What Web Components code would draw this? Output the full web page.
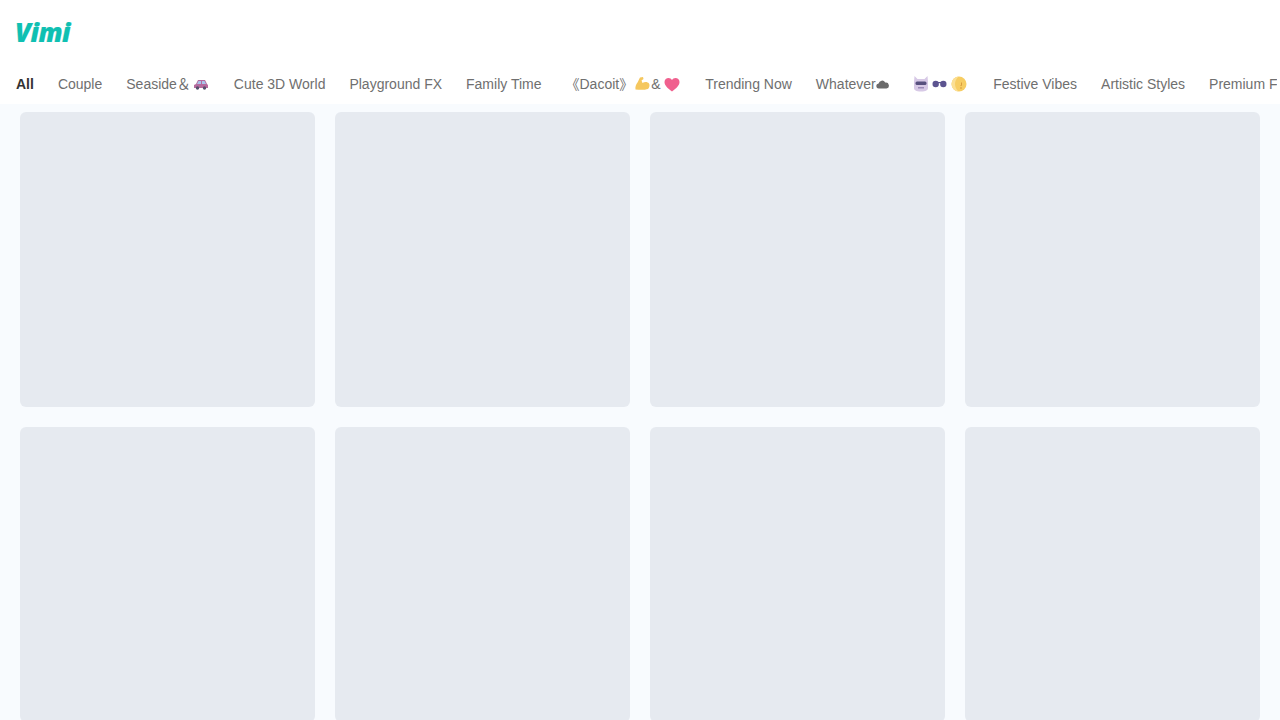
<!DOCTYPE html>
<html lang="en">
<head>
<meta charset="utf-8">
<title>Vimi</title>
<style>
    html, body { margin: 0; height: 100%; overflow: hidden; }
    body { background: #f8fbfe; font-family: "Liberation Sans", "Noto Sans CJK SC", sans-serif; }
</style>
</head>
<body>
<vimi-app>
    <vimi-header>
        <vimi-tab active>All</vimi-tab>
        <vimi-tab>Couple</vimi-tab>
        <vimi-tab>Seaside＆<svg style="margin-left:2px;margin-right:1px" width="16" height="14" viewBox="0 0 16 14"><path d="M1 11V8l2-1 2-4h7l2 4 1 1v3z" fill="#b56a9e"/><path d="M5.500 4h2.500v3H4zM9 4h2.500l1.500 3H9z" fill="#a9c3ea"/><circle cx="4.500" cy="11" r="1.700" fill="#56506e"/><circle cx="11.500" cy="11" r="1.700" fill="#56506e"/></svg></vimi-tab>
        <vimi-tab>Cute 3D World</vimi-tab>
        <vimi-tab>Playground FX</vimi-tab>
        <vimi-tab>Family Time</vimi-tab>
        <vimi-tab>《Dacoit》<svg style="margin-left:1px" width="17" height="16" viewBox="0 0 17 16"><path d="M6 1.500 9 1l.5 2-2 1.500 1 2.500c2-1.500 5-1.500 6.500.5 1 1.500.5 4-1 5.500-3 1-8 1-12.500.5C1 11 2 8 3.500 6.500 4.500 5 5 3 6 1.500z" fill="#f5c75e"/></svg>&amp;<svg style="margin-left:3px;margin-right:1.700px" width="16" height="15" viewBox="0 0 16 15"><path d="M8 14.500C3.500 11 .5 8.500.5 5 .5 2.500 2.500 1 4.500 1 6 1 7.300 1.800 8 3c.7-1.200 2-2 3.500-2 2 0 4 1.500 4 4 0 3.500-3 6-7.500 9.500z" fill="#f0608e"/></svg></vimi-tab>
        <vimi-tab>Trending Now</vimi-tab>
        <vimi-tab>Whatever<svg width="13" height="9" viewBox="0 0 13 9"><path d="M3 8.500a2.500 2.500 0 0 1-.4-5A3.500 3.500 0 0 1 9.200 2.600 3 3 0 0 1 10.500 8.500z" fill="#6b6b6b"/></svg></vimi-tab>
        <vimi-tab><svg width="16" height="16" viewBox="0 0 16 16"><path d="M1.500 0 4.500 3h7l3-3 .5 6v6c0 2-2 3.500-7 3.500S1 14 1 12V6z" fill="#d7c9e6"/><rect x="2.500" y="5.500" width="11" height="3.500" rx="1.500" fill="#57507e"/><rect x="5" y="11" width="6" height="1.500" fill="#9c8bb8"/></svg><svg style="margin-left:3px" width="15" height="8" viewBox="0 0 15 8"><circle cx="3.700" cy="4" r="3.200" fill="#5c5490"/><circle cx="11.300" cy="4" r="3.200" fill="#5c5490"/><rect x="5" y="2" width="5" height="1.200" fill="#5c5490"/></svg><svg style="margin-left:4px;margin-right:2.500px" width="16" height="16" viewBox="0 0 16 16"><circle cx="8" cy="8" r="7.500" fill="#f7cd63"/><path d="M.5 8A7.500 7.500 0 0 1 7.500.5C5 3 4 5.500 4 8s1 5 3.500 7.500A7.500 7.500 0 0 1 .5 8z" fill="#fbdf94"/><path d="M10.500 6.500v3h-1M9 12h2" stroke="#d99c3f" fill="none"/></svg></vimi-tab>
        <vimi-tab>Festive Vibes</vimi-tab>
        <vimi-tab>Artistic Styles</vimi-tab>
        <vimi-tab>Premium Filters</vimi-tab>
    </vimi-header>
    <vimi-grid>
        <vimi-card></vimi-card><vimi-card></vimi-card><vimi-card></vimi-card><vimi-card></vimi-card>
        <vimi-card></vimi-card><vimi-card></vimi-card><vimi-card></vimi-card><vimi-card></vimi-card>
    </vimi-grid>
</vimi-app>

<script>
class VimiApp extends HTMLElement {
    constructor() {
        super();
        this.attachShadow({ mode: 'open' }).innerHTML = `
            <style>
                :host { display: flex; flex-direction: column; height: 720px; overflow: hidden; }
            </style>
            <slot></slot>
        `;
    }
}

class VimiHeader extends HTMLElement {
    constructor() {
        super();
        this.attachShadow({ mode: 'open' }).innerHTML = `
            <style>
                :host { display: block; background: #fff; height: 104px; flex: none; overflow: hidden; }
                .logo {
                    height: 64px;
                    padding-left: 15px;
                    font: italic 800 26px/64px "Open Sans", sans-serif;
                    color: #0fc0b2;
                    -webkit-text-stroke: .2px #0fc0b2;
                    letter-spacing: -.5px;
                }
                .tabs {
                    display: flex;
                    gap: 24px;
                    height: 40px;
                    margin-right: 3px;
                    padding-left: 16px;
                    align-items: center;
                    white-space: nowrap;
                    overflow: hidden;
                }
            </style>
            <div class="logo">Vimi</div>
            <div class="tabs"><slot></slot></div>
        `;
    }
}

class VimiTab extends HTMLElement {
    constructor() {
        super();
        this.attachShadow({ mode: 'open' }).innerHTML = `
            <style>
                :host {
                    display: inline-flex;
                    flex: none;
                    align-items: center;
                    font-size: 14px;
                    line-height: 20px;
                    color: #6f6f6f;
                }
                :host([active]) { font-weight: 700; color: #333; }
            </style>
            <slot></slot>
        `;
    }
}

class VimiGrid extends HTMLElement {
    constructor() {
        super();
        this.attachShadow({ mode: 'open' }).innerHTML = `
            <style>
                :host {
                    display: grid;
                    grid-template-columns: repeat(4, 295px);
                    gap: 20px;
                    padding: 8px 20px;
                }
            </style>
            <slot></slot>
        `;
    }
}

class VimiCard extends HTMLElement {
    constructor() {
        super();
        this.attachShadow({ mode: 'open' }).innerHTML = `
            <style>
                :host { display: block; height: 295px; background: #e6eaf0; border-radius: 6px; }
            </style>
        `;
    }
}

customElements.define("vimi-app", VimiApp);
customElements.define("vimi-header", VimiHeader);
customElements.define("vimi-tab", VimiTab);
customElements.define("vimi-grid", VimiGrid);
customElements.define("vimi-card", VimiCard);
</script>
</body>
</html>
